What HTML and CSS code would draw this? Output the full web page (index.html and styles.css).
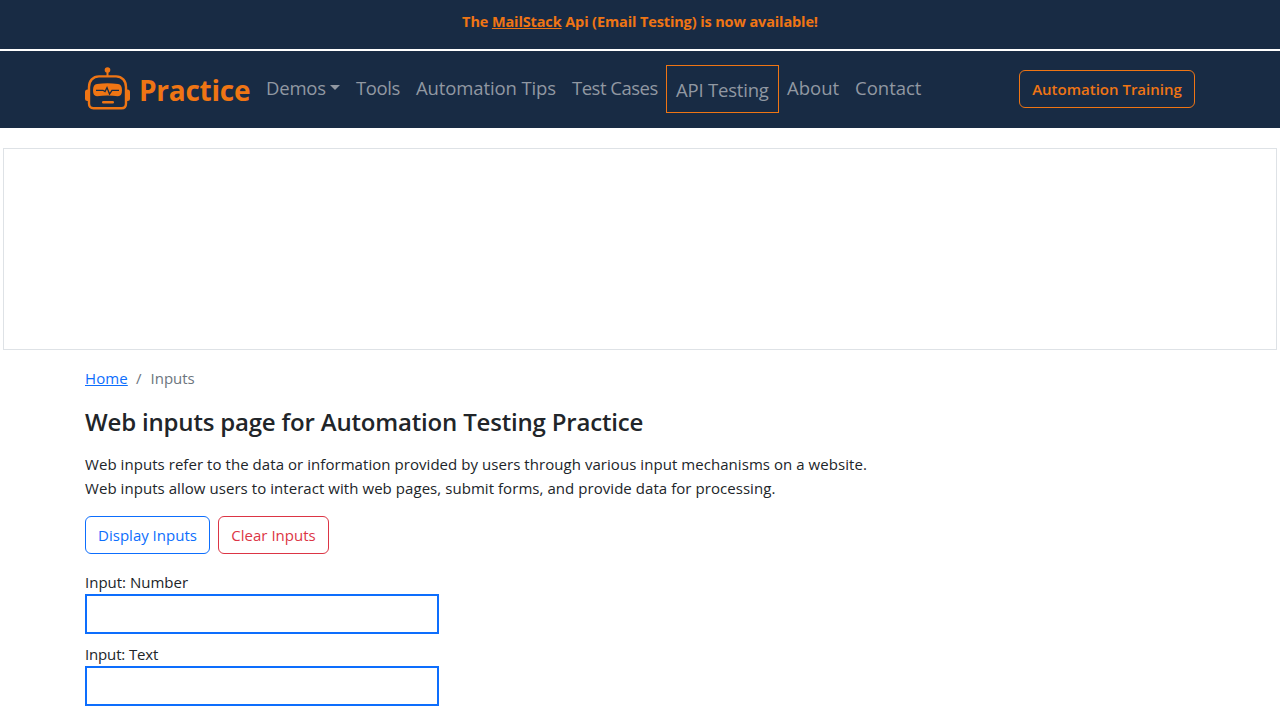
FILE: index.html
```html
<!DOCTYPE html>
<html lang="en">
<head>
<meta charset="utf-8">
<title>Web inputs page for Automation Testing Practice</title>
<link rel="stylesheet" href="styles.css">
</head>
<body>
<div class="banner"><span class="banner-text">The <a href="#">MailStack</a> Api (Email Testing) is now available!</span></div>
<nav class="navbar">
  <div class="container nav-inner">
    <a class="brand" href="#">
      <svg class="logo" width="46" height="44" viewBox="0 0 46 44" fill="none" stroke="#ef7514" stroke-width="2.4">
        <path d="M22.500 4v6" stroke-width="2"/>
        <circle cx="22.500" cy="3" r="2.800" fill="#ef7514" stroke="none"/>
        <path d="M14 9.400h17c6 0 10 4.500 10 10.500v16.600c0 3-1.500 4.800-4.500 4.800h-28c-3 0-4.500-1.800-4.500-4.800V19.900c0-6 4-10.500 10-10.500z"/>
        <path d="M4 23.500H2.500Q1 23.500 1 25v6.500Q1 33 2.500 33H4zM41 23.500h1.500q1.500 0 1.500 1.500v6.500q0 1.500-1.500 1.500H41z" fill="#ef7514" stroke-width="2"/>
        <path d="M12 17q10.500-1.500 21 0q4 .5 4 6.300t-4 5.900q-10.500-1.600-21 0q-4 0-4-5.900t4-6.300z" fill="#ef7514" stroke="none"/>
        <path d="M11 23.300h7l2 1.300 2-4 2.500 6.500 2.500-3.800H34" stroke="#182b44" stroke-width="1.300"/>
        <path d="M18.200 35.200h9.600" stroke-linecap="round"/>
      </svg>
      <span class="brand-text">Practice</span>
    </a>
    <ul class="nav-list">
      <li class="nav-demos"><a href="#">Demos</a><i class="caret"></i></li>
      <li class="nav-tools"><a href="#">Tools</a></li>
      <li class="nav-tips"><a href="#">Automation Tips</a></li>
      <li class="nav-cases"><a href="#">Test Cases</a></li>
      <li class="nav-api"><a href="#">API Testing</a></li>
      <li class="nav-about"><a href="#">About</a></li>
      <li class="nav-contact"><a href="#">Contact</a></li>
    </ul>
    <a class="btn btn-training" href="#"><span>Automation Training</span></a>
  </div>
</nav>
<div class="ad"></div>
<main class="container">
  <div class="breadcrumb"><a href="#">Home</a><span class="slash">/</span><span>Inputs</span></div>
  <h1><span>Web inputs page for Automation Testing Practice</span></h1>
  <p><span class="line-one">Web inputs refer to the data or information provided by users through various input mechanisms on a website.</span><br><span class="line-two">Web inputs allow users to interact with web pages, submit forms, and provide data for processing.</span></p>
  <div class="actions">
    <button class="btn btn-display">Display Inputs</button>
    <button class="btn btn-clear">Clear Inputs</button>
  </div>
  <div class="field"><label for="num">Input: Number</label><input id="num" type="number"></div>
  <div class="field"><label for="txt">Input: Text</label><input id="txt" type="text"></div>
</main>
</body>
</html>
```
FILE: styles.css
```css
* { box-sizing: border-box; }
body { margin: 0; height: 720px; overflow: hidden; background: #fff; color: #212529; font: 15px/24px "Open Sans", sans-serif; }
a { color: inherit; }
.container { width: 1110px; margin: 0 auto; }
.banner { height: 51px; padding-top: 10px; border-bottom: 2px solid #fff; background: #182b44; color: #ef7514; text-align: center; font-size: 14.5px; font-weight: 700; white-space: nowrap; }
.banner-text { letter-spacing: -0.12px; }
.navbar { height: 77px; background: #182b44; }
.nav-inner { display: flex; align-items: flex-start; white-space: nowrap; }
.nav-inner a { text-decoration: none; }
.brand { display: flex; width: 173px; padding-top: 16px; color: #ef7514; }
.logo { flex: none; margin-right: 8px; }
.brand-text { font-size: 28px; line-height: 46px; font-weight: 700; letter-spacing: -0.25px; }
.nav-list { display: flex; margin: 14px 0 0; padding: 0; list-style: none; color: #9198a2; font-size: 18.5px; line-height: 30px; }
.nav-list li { height: 46px; padding: 8px; }
.nav-demos { display: flex; width: 90px; letter-spacing: -0.2px; }
.nav-tools { width: 60px; letter-spacing: -0.4px; }
.nav-tips { width: 156px; letter-spacing: -0.12px; }
.nav-cases { width: 102px; letter-spacing: -0.5px; }
.nav-list .nav-api { width: 113px; height: 48px; padding: 8px 8px 8px 9px; border: 1px solid #ef7514; letter-spacing: -0.2px; line-height: 32px; }
.nav-about { width: 68px; }
.nav-contact { width: 84px; }
.caret { width: 10px; height: 5px; margin: 12px 0 0 auto; border: 5px solid transparent; border-top-color: #9198a2; border-bottom: 0; }
.btn { height: 38px; padding: 0; border: 1px solid; border-radius: 6px; background: transparent; font: 15px/36px "Open Sans", sans-serif; text-align: center; white-space: nowrap; }
.btn-training { width: 176px; margin: 19px 0 0 auto; color: #ef7514; font-weight: 600; }
.ad { height: 202px; margin: 20px 3px 0; border: 1px solid #dee2e6; }
.breadcrumb { display: flex; gap: 8px; margin-top: 16px; color: #6c757d; }
.breadcrumb a { width: 43px; color: #0d6efd; letter-spacing: 0.1px; }
.slash { width: 6.5px; }
h1 { margin: 17px 0 15px; font-size: 24px; line-height: 30px; font-weight: 600; letter-spacing: -0.18px; white-space: nowrap; }
p { margin: 0 0 16px; white-space: nowrap; letter-spacing: 0.055px; }
.actions { display: flex; gap: 8px; margin-bottom: 16px; }
.btn-display { width: 125px; color: #0d6efd; }
.btn-clear { width: 111px; color: #dc3545; }
.field { width: 354px; margin-bottom: 8px; }
.field label { display: block; }
.field label[for="txt"] { letter-spacing: -0.15px; }
.field input { display: block; width: 354px; height: 40px; border: 2px solid #0d6efd; background: #fff; }
```
